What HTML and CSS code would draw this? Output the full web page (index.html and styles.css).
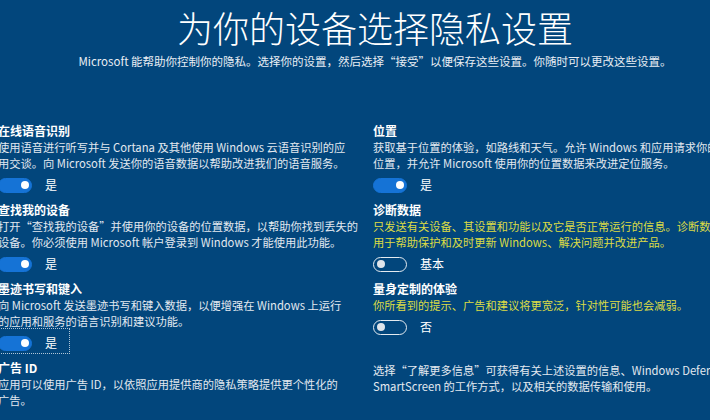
FILE: index.html
```html
<!DOCTYPE html>
<html lang="zh-CN">
<head>
<meta charset="utf-8">
<title>为你的设备选择隐私设置</title>
<link rel="stylesheet" href="styles.css">
</head>
<body>
<main class="page">
  <header class="intro">
    <h1 class="title">为你的设备选择隐私设置</h1>
    <p class="subtitle">Microsoft 能帮助你控制你的隐私。选择你的设置，然后选择“接受”以便保存这些设置。你随时可以更改这些设置。</p>
  </header>

  <div class="columns">
    <section class="col">
      <div class="setting">
        <h2 class="setting-title">在线语音识别</h2>
        <p class="setting-desc">使用语音进行听写并与 Cortana 及其他使用 Windows 云语音识别的应<br>用交谈。向 Microsoft 发送你的语音数据以帮助改进我们的语音服务。</p>
        <div class="switch-row"><span class="switch on"></span><span class="state">是</span></div>
      </div>
      <div class="setting">
        <h2 class="setting-title">查找我的设备</h2>
        <p class="setting-desc">打开“查找我的设备”并使用你的设备的位置数据，以帮助你找到丢失的<br>设备。你必须使用 Microsoft 帐户登录到 Windows 才能使用此功能。</p>
        <div class="switch-row"><span class="switch on"></span><span class="state">是</span></div>
      </div>
      <div class="setting">
        <h2 class="setting-title">墨迹书写和键入</h2>
        <p class="setting-desc">向 Microsoft 发送墨迹书写和键入数据，以便增强在 Windows 上运行<br>的应用和服务的语言识别和建议功能。</p>
        <div class="switch-row focused"><span class="switch on"></span><span class="state">是</span></div>
      </div>
      <div class="setting">
        <h2 class="setting-title">广告 ID</h2>
        <p class="setting-desc">应用可以使用广告 ID，以依照应用提供商的隐私策略提供更个性化的<br>广告。</p>
      </div>
    </section>

    <section class="col">
      <div class="setting">
        <h2 class="setting-title">位置</h2>
        <p class="setting-desc">获取基于位置的体验，如路线和天气。允许 Windows 和应用请求你的<br>位置，并允许 Microsoft 使用你的位置数据来改进定位服务。</p>
        <div class="switch-row"><span class="switch on"></span><span class="state">是</span></div>
      </div>
      <div class="setting">
        <h2 class="setting-title">诊断数据</h2>
        <p class="setting-desc warn">只发送有关设备、其设置和功能以及它是否正常运行的信息。诊断数据<br>用于帮助保护和及时更新 Windows、解决问题并改进产品。</p>
        <div class="switch-row"><span class="switch"></span><span class="state">基本</span></div>
      </div>
      <div class="setting">
        <h2 class="setting-title">量身定制的体验</h2>
        <p class="setting-desc warn">你所看到的提示、广告和建议将更宽泛，针对性可能也会减弱。</p>
        <div class="switch-row"><span class="switch"></span><span class="state">否</span></div>
      </div>
      <p class="note">选择“了解更多信息”可获得有关上述设置的信息、Windows Defender<br>SmartScreen 的工作方式，以及相关的数据传输和使用。</p>
    </section>
  </div>
</main>
</body>
</html>
```

FILE: styles.css
```css
html, body {
  margin: 0;
  padding: 0;
}

body {
  width: 710px;
  height: 420px;
  overflow: hidden;
  background: #02467c;
  color: #ffffff;
  font-family: "Noto Sans CJK SC", "Noto Sans", sans-serif;
}

.page {
  width: 750px;
}

.intro {
  text-align: center;
}

.title {
  margin: 7px 0 0;
  font-size: 36px;
  line-height: 40px;
  font-weight: 300;
  color: #ffffff;
}

.subtitle {
  margin: 6px 0 0;
  font-size: 11.5px;
  line-height: 16px;
  color: #e9eef4;
  white-space: nowrap;
}

.columns {
  display: grid;
  grid-template-columns: 358px 358px;
  column-gap: 17px;
  margin: 54px 0 0 -2px;
}

.col {
  display: flex;
  flex-direction: column;
}

.setting {
  display: flex;
  flex-direction: column;
  align-items: flex-start;
}

.setting-title {
  margin: 0;
  font-size: 12px;
  line-height: 16px;
  font-weight: 700;
  color: #ffffff;
}

.setting-desc {
  margin: 0;
  font-size: 11.25px;
  line-height: 16px;
  color: #e3e9f0;
  white-space: nowrap;
}

.setting-desc.warn {
  color: #dcdc45;
}

.switch-row {
  display: inline-flex;
  align-items: center;
  gap: 13px;
  height: 20px;
  margin: 4px 0 7px;
}

.switch-row.focused {
  padding: 4px 12px 0 0;
  margin-top: 0;
  outline: 1px dotted rgba(235, 240, 245, 0.75);
  outline-offset: 0;
}

.switch {
  position: relative;
  box-sizing: border-box;
  width: 34px;
  height: 15px;
  border-radius: 8px;
  border: 1.5px solid #e4eaf0;
}

.switch::after {
  content: "";
  position: absolute;
  top: 2px;
  left: 2.5px;
  width: 8px;
  height: 8px;
  border-radius: 50%;
  background: #dfe4ea;
}

.switch.on {
  background: #1573d6;
  border-color: #1573d6;
}

.switch.on::after {
  left: auto;
  right: 2.5px;
  background: #ffffff;
}

.state {
  font-size: 12px;
  line-height: 16px;
  color: #ffffff;
}

.note {
  margin: 18px 0 0;
  font-size: 11.25px;
  line-height: 16px;
  color: #e3e9f0;
  white-space: nowrap;
}
```
